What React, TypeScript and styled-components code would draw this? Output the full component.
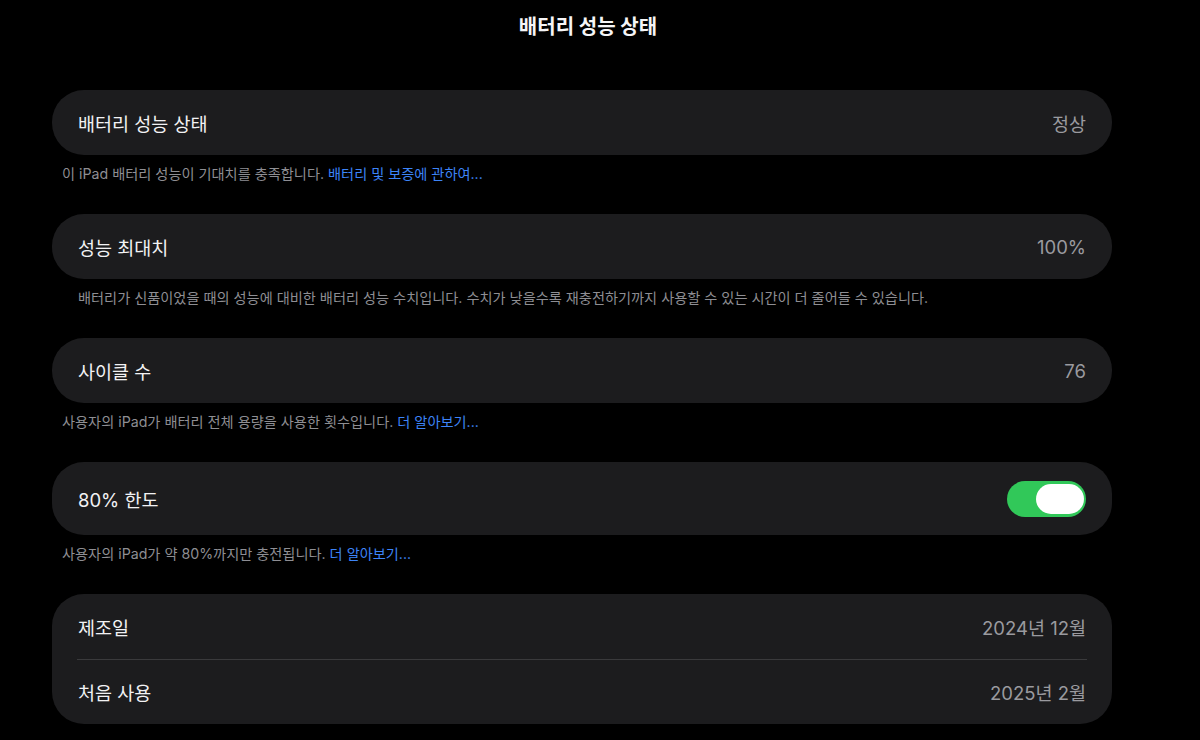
import React, { useState } from 'react';
import styled, { createGlobalStyle } from 'styled-components';

const GlobalStyle = createGlobalStyle`
  html, body {
    margin: 0;
    padding: 0;
    background: #000000;
  }
  body {
    font-family: Inter, "Noto Sans CJK KR", sans-serif;
    -webkit-font-smoothing: antialiased;
  }
`;

interface Row {
  label: string;
  value?: string;
}

interface Section {
  rows: Row[];
  toggle?: boolean;
  note?: string;
  link?: string;
  noteIndent?: boolean;
}

const sections: Section[] = [
  {
    rows: [{ label: '배터리 성능 상태', value: '정상' }],
    note: '이 iPad 배터리 성능이 기대치를 충족합니다.',
    link: '배터리 및 보증에 관하여...',
  },
  {
    rows: [{ label: '성능 최대치', value: '100%' }],
    note: '배터리가 신품이었을 때의 성능에 대비한 배터리 성능 수치입니다. 수치가 낮을수록 재충전하기까지 사용할 수 있는 시간이 더 줄어들 수 있습니다.',
    noteIndent: true,
  },
  {
    rows: [{ label: '사이클 수', value: '76' }],
    note: '사용자의 iPad가 배터리 전체 용량을 사용한 횟수입니다.',
    link: '더 알아보기...',
  },
  {
    rows: [{ label: '80% 한도' }],
    toggle: true,
    note: '사용자의 iPad가 약 80%까지만 충전됩니다.',
    link: '더 알아보기...',
  },
  {
    rows: [
      { label: '제조일', value: '2024년 12월' },
      { label: '처음 사용', value: '2025년 2월' },
    ],
  },
];

const App: React.FC = () => {
  const [limitOn, setLimitOn] = useState(true);

  return (
    <>
      <GlobalStyle />
      <Page>
        <Header>배터리 성능 상태</Header>
        <List>
          {sections.map((section, i) => (
            <Group key={i}>
              <Card>
                {section.rows.map((row, j) => (
                  <Item key={j} $tall={!!section.toggle} $divider={j > 0}>
                    <Label>{row.label}</Label>
                    {row.value && <Value>{row.value}</Value>}
                    {section.toggle && (
                      <Switch $on={limitOn} onClick={() => setLimitOn(!limitOn)}>
                        <Knob $on={limitOn} />
                      </Switch>
                    )}
                  </Item>
                ))}
              </Card>
              {section.note && (
                <Note $indent={!!section.noteIndent}>
                  {section.note}
                  {section.link && <NoteLink> {section.link}</NoteLink>}
                </Note>
              )}
            </Group>
          ))}
        </List>
      </Page>
    </>
  );
};

export default App;

const Page = styled.div`
  width: 1200px;
  height: 740px;
  overflow: hidden;
  background: #000000;
  color: #ffffff;
`;

const Header = styled.h1`
  margin: 0;
  padding-top: 15px;
  padding-right: 24px;
  text-align: center;
  font-size: 20px;
  line-height: 24px;
  font-weight: 700;
  color: #f5f5f7;
`;

const List = styled.div`
  display: flex;
  flex-direction: column;
  padding: 51px 0 0 52px;
  width: 1060px;
`;

const Group = styled.div`
  display: flex;
  flex-direction: column;
  margin-bottom: 31px;
`;

const Card = styled.div`
  background: #1c1c1e;
  border-radius: 32px;
  overflow: hidden;
`;

const Item = styled.div<{ $tall: boolean; $divider: boolean }>`
  position: relative;
  display: flex;
  align-items: center;
  justify-content: space-between;
  height: ${({ $tall }) => ($tall ? '73px' : '65px')};
  padding: 0 26px;

  ${({ $divider }) =>
    $divider &&
    `
    &::before {
      content: '';
      position: absolute;
      top: 0;
      left: 25px;
      right: 25px;
      height: 1px;
      background: #3a3a3c;
    }
  `}
`;

const Label = styled.span`
  font-size: 18.5px;
  color: #f2f2f4;
`;

const Value = styled.span`
  font-size: 18.5px;
  color: #9a9a9f;
`;

const Switch = styled.button<{ $on: boolean }>`
  position: relative;
  width: 79px;
  height: 36px;
  border: none;
  padding: 0;
  border-radius: 18px;
  background: ${({ $on }) => ($on ? '#31c859' : '#39393d')};
  cursor: pointer;
`;

const Knob = styled.span<{ $on: boolean }>`
  position: absolute;
  top: 3px;
  left: ${({ $on }) => ($on ? '29px' : '2px')};
  width: 48px;
  height: 30px;
  border-radius: 15px;
  background: #ffffff;
`;

const Note = styled.p<{ $indent: boolean }>`
  margin: 10px 0 0;
  padding-left: ${({ $indent }) => ($indent ? '26px' : '10px')};
  font-size: 14.2px;
  line-height: 18px;
  color: #8e8e93;
`;

const NoteLink = styled.span`
  color: #3d84f7;
`;
